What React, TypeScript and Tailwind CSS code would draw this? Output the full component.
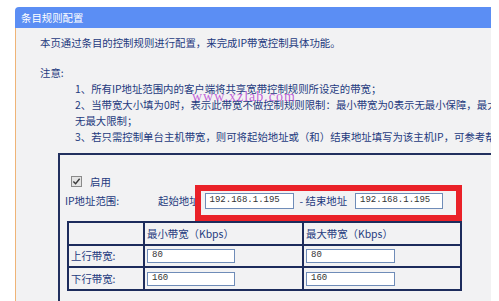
import React from 'react'

const font = { fontFamily: '"Noto Sans CJK SC", "Noto Sans", sans-serif' }

function Field({ value, className }: { value: string; className: string }) {
    return (
        <div className={`bg-white border border-[#6f8cb8] flex items-center pl-[4px] text-[9px] text-[#333] font-['Liberation_Mono',monospace] ${className}`}>
            {value}
        </div>
    )
}

export default function App() {
    return (
        <div
            className="relative w-[499px] h-[301px] overflow-hidden bg-white pt-[7px] pl-[15px] text-[10.4px] text-[#1e3a7e]"
            style={font}
        >
            {/* Title bar */}
            <div className="w-[476px] h-[21px] bg-[#5b8ef4] rounded-tl-[4px] flex items-center pl-[6px] text-white text-[10.4px]">
                条目规则配置
            </div>

            {/* Content */}
            <div className="w-[476px] h-[280px] bg-[#f2f2f3] border-l border-[#efb477] overflow-hidden pl-[24px] pt-[7px]">
                <p className="leading-[16px] whitespace-nowrap">本页通过条目的控制规则进行配置，来完成IP带宽控制具体功能。</p>

                <p className="leading-[16px] mt-[14px]">注意:</p>
                <div className="pl-[35px] leading-[16px] whitespace-nowrap">
                    <p>1、所有IP地址范围内的客户端将共享宽带控制规则所设定的带宽；</p>
                    <p>2、当带宽大小填为0时，表示此带宽不做控制规则限制：最小带宽为0表示无最小保障，最大带宽为0表示</p>
                    <p>无最大限制；</p>
                    <p>3、若只需控制单台主机带宽，则可将起始地址或（和）结束地址填写为该主机IP，可参考帮助页面。</p>
                </div>

                {/* Rule box */}
                <div className="mt-[8px] ml-[18px] w-[470px] h-[200px] border-2 border-[#22305e] pl-[5px] pt-[21px]">
                    <div className="flex items-center h-[11px] ml-[6px]">
                        <span className="w-[11px] h-[11px] border border-[#8a8a8a] bg-[#e4e4e4] flex items-center justify-center">
                            <svg viewBox="0 0 10 10" className="w-[9px] h-[9px]">
                                <path d="M1.5 5 L4 7.5 L8.5 2" fill="none" stroke="#3a3a3a" strokeWidth="1.6" />
                            </svg>
                        </span>
                        <span className="ml-[8px]">启用</span>
                    </div>

                    <div className="flex items-center mt-[6px] h-[16px]">
                        <span className="w-[93px]">IP地址范围:</span>
                        <span>起始地址</span>
                        <Field value="192.168.1.195" className="ml-[5px] w-[89px] h-[16px]" />
                        <span className="ml-[6px]">- 结束地址</span>
                        <Field value="192.168.1.195" className="ml-[8px] w-[88px] h-[16px]" />
                    </div>

                    <table className="mt-[12px] ml-[2px] border-collapse border-2 border-[#1d2c5c]">
                        <tbody>
                            <tr className="h-[23px]">
                                <td className="w-[76px] border-2 border-[#1d2c5c]"></td>
                                <td className="w-[159px] border-2 border-[#1d2c5c] pl-[2px]">最小带宽（Kbps）</td>
                                <td className="w-[158px] border-2 border-[#1d2c5c] pl-[2px]">最大带宽（Kbps）</td>
                            </tr>
                            <tr className="h-[22px]">
                                <td className="border-2 border-[#1d2c5c] pl-[2px]">上行带宽:</td>
                                <td className="border-2 border-[#1d2c5c] pl-[2px]">
                                    <Field value="80" className="w-[88px] h-[14px]" />
                                </td>
                                <td className="border-2 border-[#1d2c5c] pl-[2px]">
                                    <Field value="80" className="w-[89px] h-[14px]" />
                                </td>
                            </tr>
                            <tr className="h-[23px]">
                                <td className="border-2 border-[#1d2c5c] pl-[2px]">下行带宽:</td>
                                <td className="border-2 border-[#1d2c5c] pl-[2px]">
                                    <Field value="160" className="w-[88px] h-[14px]" />
                                </td>
                                <td className="border-2 border-[#1d2c5c] pl-[2px]">
                                    <Field value="160" className="w-[89px] h-[14px]" />
                                </td>
                            </tr>
                        </tbody>
                    </table>
                </div>
            </div>

            {/* Watermark */}
            <div className="absolute left-[192px] top-[90px] text-[14px] text-[#b43cd2]/80 font-['Liberation_Serif',serif] tracking-[1px] leading-none">
                www.xzlab.com
            </div>

            {/* Red annotation box */}
            <div className="absolute left-[195px] top-[185px] w-[267px] h-[36px] border-[6px] border-[#ea2128]"></div>
        </div>
    )
}
